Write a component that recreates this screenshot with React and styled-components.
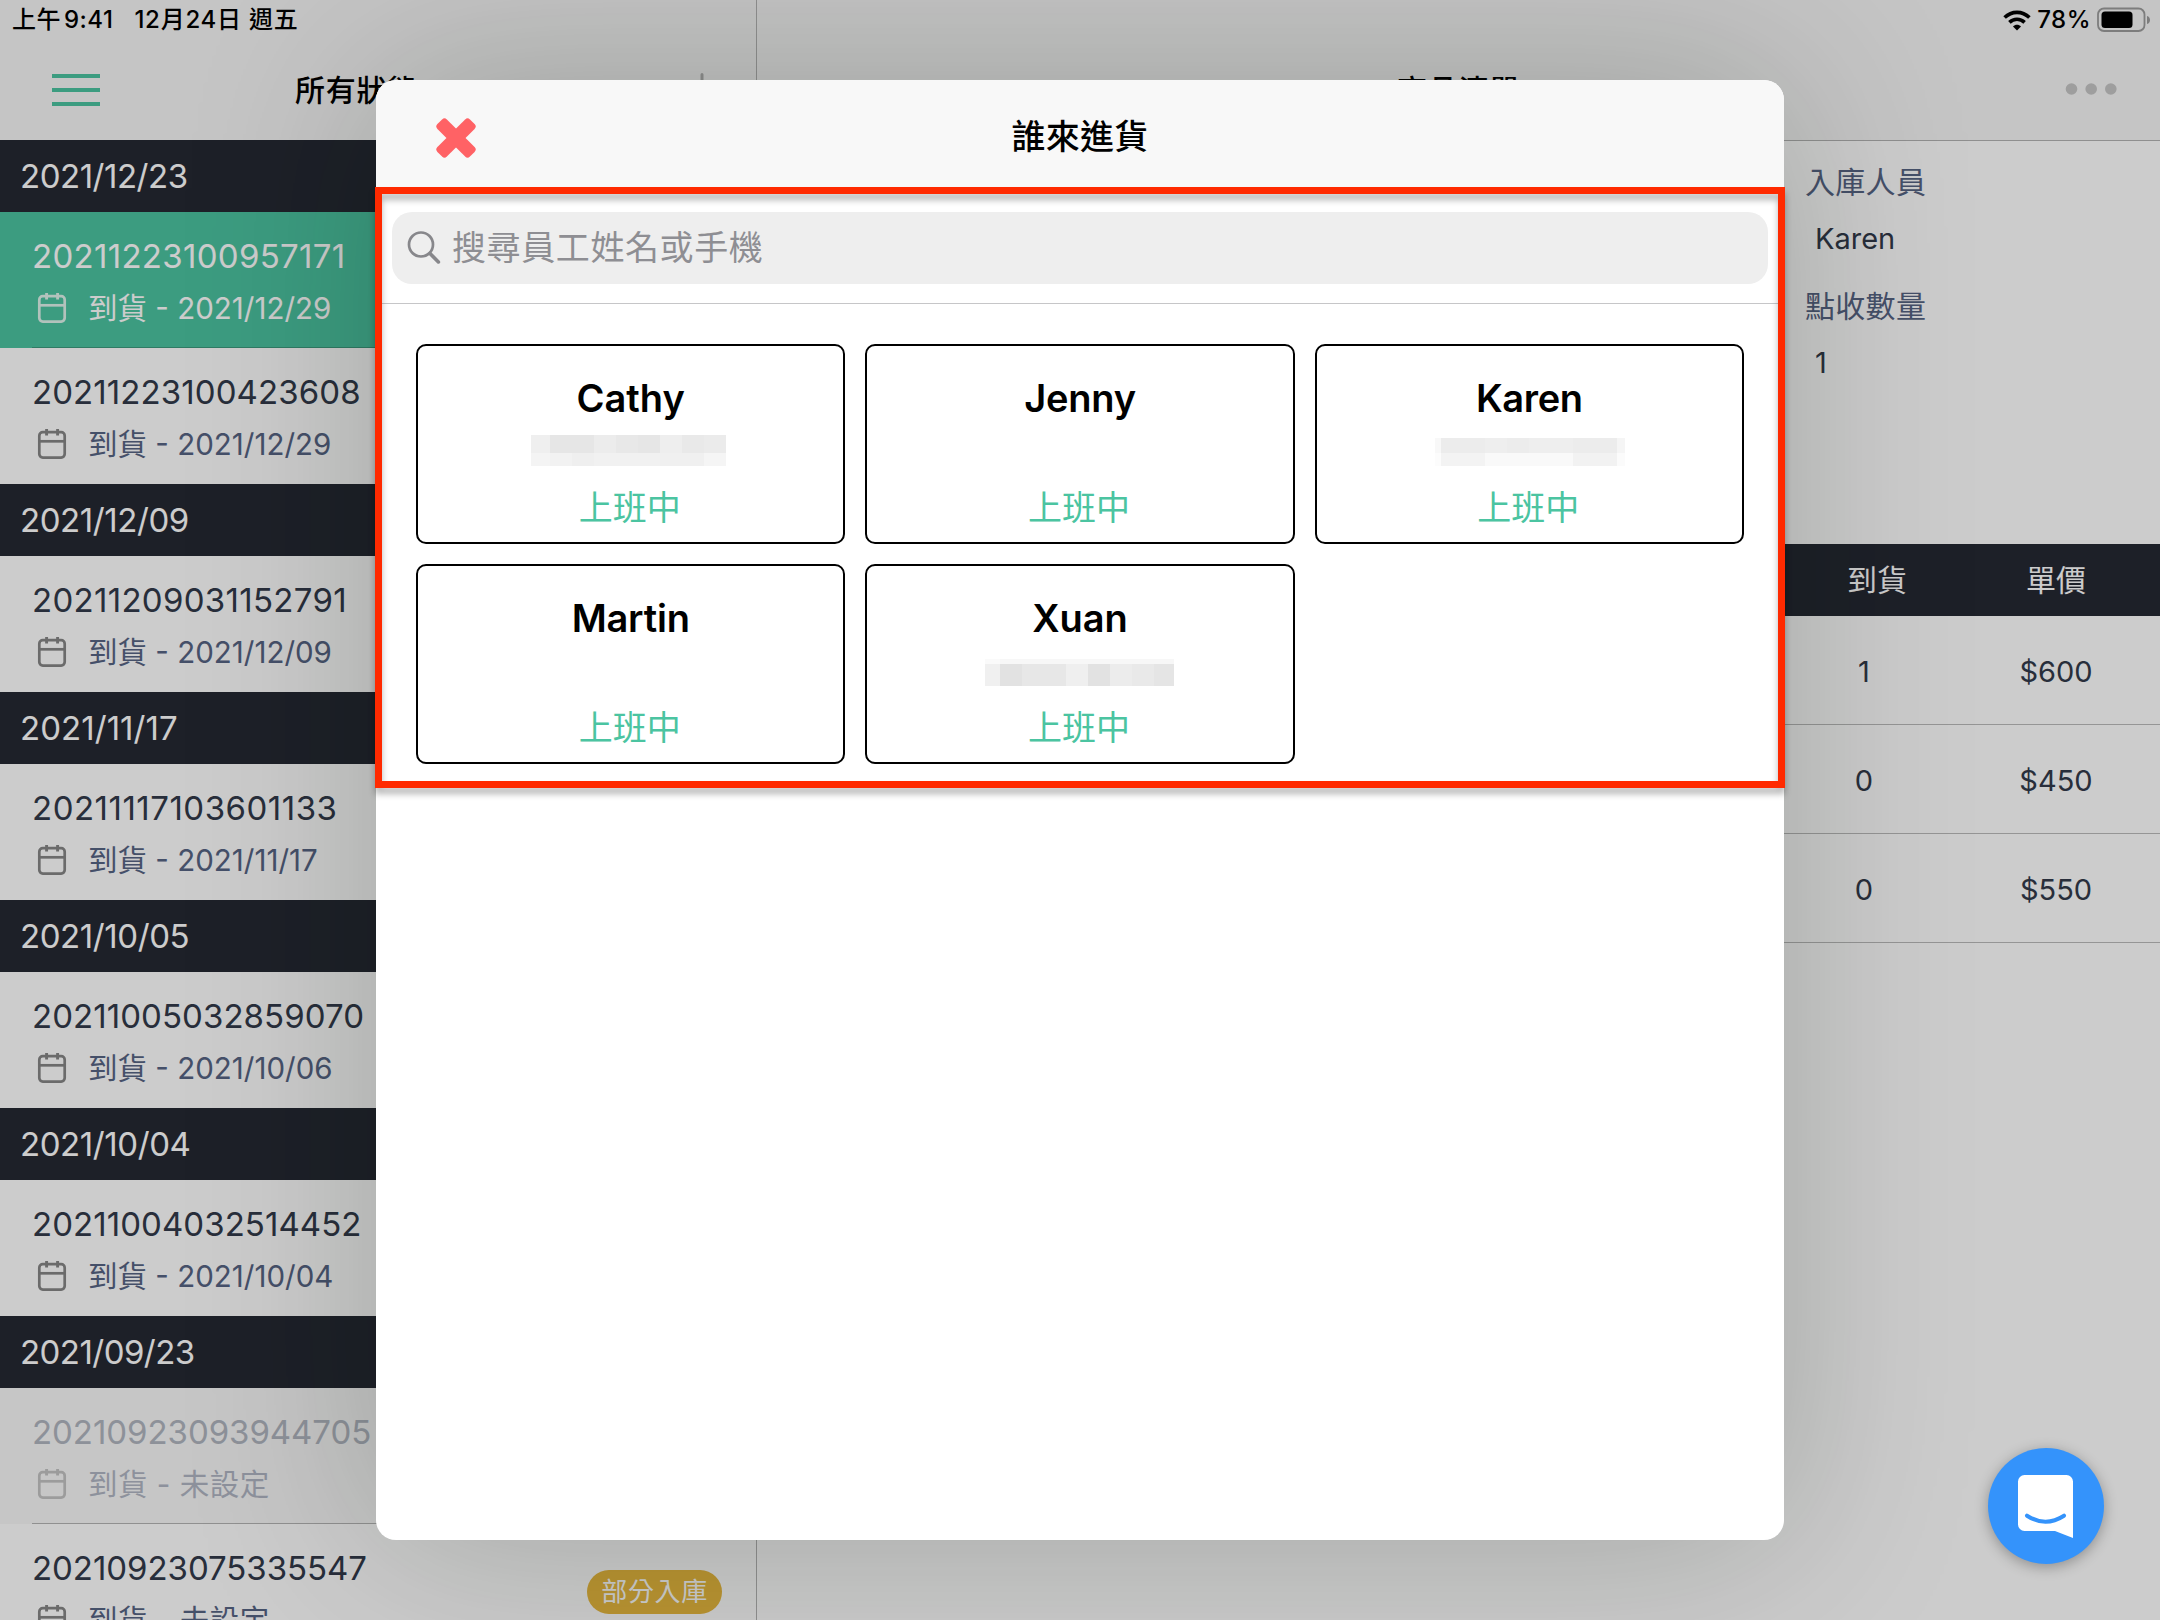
import React from "react";
import styled, { createGlobalStyle } from "styled-components";

const GlobalStyle = createGlobalStyle`
  * { box-sizing: border-box; }
  body {
    margin: 0;
    background: #fff;
    font-family: Inter, "Noto Sans CJK TC", sans-serif;
    font-size: 29px;
    color: #323a4a;
  }
`;

const Screen = styled.div`
  position: relative;
  display: flex;
  width: 2160px;
  height: 1620px;
  overflow: hidden;
  background: #fff;
`;

/* ---------- status bar ---------- */

const StatusBar = styled.div`
  position: absolute;
  top: 0;
  left: 0;
  right: 0;
  z-index: 3;
  display: flex;
  align-items: center;
  justify-content: space-between;
  height: 40px;
  padding: 0 9px 0 12px;
  font-size: 24px;
  font-weight: 500;
  line-height: 40px;
  color: #000;
`;

const StatusGroup = styled.div`
  display: flex;
  align-items: center;
  gap: ${(p) => p.$gap}px;
`;

const StatusText = styled.span`
  letter-spacing: ${(p) => p.$track || 0}px;
  word-spacing: ${(p) => p.$word || 0}px;
  white-space: pre;
`;

/* ---------- sidebar ---------- */

const Sidebar = styled.aside`
  display: flex;
  flex-direction: column;
  flex: none;
  width: 757px;
  border-right: 1px solid #b5b5b5;
`;

const NavBar = styled.header`
  display: flex;
  align-items: center;
  flex: none;
  height: ${(p) => p.$height}px;
  padding: 40px ${(p) => p.$right}px 0 52px;
  background: #f7f7f7;
  border-bottom: ${(p) => (p.$line ? "1px solid #b3b3b3" : "none")};
`;

const NavTitle = styled.h1`
  margin: 0 0 0 ${(p) => p.$left || 0}px;
  flex: ${(p) => (p.$center ? 1 : "none")};
  text-align: ${(p) => (p.$center ? "center" : "left")};
  font-size: 30px;
  font-weight: 500;
  line-height: 44px;
  letter-spacing: 0.7px;
  color: #000;
`;

const Burger = styled.div`
  display: flex;
  flex-direction: column;
  gap: 10px;
  width: 48px;
`;

const BurgerLine = styled.i`
  height: 4px;
  background: #4bc4a1;
`;

const Spacer = styled.div`
  flex: 1;
`;

const DateHeader = styled.h2`
  flex: none;
  height: 72px;
  margin: 0;
  padding: 1px 0 0 20px;
  background: #252833;
  color: #fff;
  font-size: 33px;
  font-weight: 400;
  line-height: 71px;
  letter-spacing: ${(p) => p.$track || 0}px;
`;

const OrderRow = styled.div`
  flex: none;
  display: flex;
  justify-content: space-between;
  height: 136px;
  padding-left: 32px;
  background: ${(p) => (p.$selected ? "#4bc4a1" : p.$faded ? "#f8f8f8" : "#fff")};
  color: ${(p) => (p.$selected ? "#fff" : p.$faded ? "#b1b6c0" : "#323a4a")};
`;

const OrderBody = styled.div`
  flex: 1;
  display: flex;
  justify-content: space-between;
  border-bottom: ${(p) =>
    p.$divider ? `1px solid ${p.$selected ? "#3b9a7e" : "#b5b5b5"}` : "none"};
`;

const OrderId = styled.div`
  margin-top: 20px;
  height: 48px;
  font-size: 33px;
  line-height: 48px;
  letter-spacing: ${(p) => p.$track || 0}px;
`;

const OrderMeta = styled.div`
  display: flex;
  align-items: center;
  gap: 21px;
  height: 48px;
  margin-top: 4px;
  padding-left: 5px;
  font-size: 29.5px;
  line-height: 48px;
  white-space: pre;
  color: ${(p) => (p.$selected ? "#fff" : p.$faded ? "#b1b6c4" : "#576484")};
`;

const MetaText = styled.span`
  letter-spacing: ${(p) => (p.$wide ? 0.5 : 0)}px;
`;

const Badge = styled.span`
  flex: none;
  align-self: flex-start;
  height: 44px;
  margin: 46px 34px 0 0;
  padding: 0 14px;
  border-radius: 22px;
  background: #e9b93f;
  color: #fff;
  font-size: 26px;
  line-height: 43px;
  letter-spacing: 0.7px;
`;

/* ---------- detail pane ---------- */

const Detail = styled.main`
  flex: 1;
  display: flex;
  flex-direction: column;
`;

const Summary = styled.dl`
  flex: none;
  display: flex;
  flex-direction: column;
  align-items: flex-start;
  width: 360px;
  height: 403px;
  margin: 0 0 0 auto;
  padding: 16px 0 0 5px;
`;

const Term = styled.dt`
  height: 50px;
  margin-top: ${(p) => p.$top || 0}px;
  color: #576484;
  font-size: 30px;
  line-height: 50px;
  letter-spacing: 0.3px;
`;

const Value = styled.dd`
  height: 50px;
  margin: 7px 0 0 10px;
  font-size: 29px;
  line-height: 50px;
`;

const TableRow = styled.div`
  flex: none;
  display: flex;
  justify-content: flex-end;
  height: ${(p) => (p.$head ? 72 : 109)}px;
  line-height: ${(p) => (p.$head ? 73 : 111)}px;
  padding-right: 8px;
  background: ${(p) => (p.$head ? "#252833" : "#fff")};
  color: ${(p) => (p.$head ? "#fff" : "#323a4a")};
  font-size: ${(p) => (p.$head ? 30 : 29)}px;
  border-bottom: ${(p) => (p.$head ? "none" : "1px solid #bbb")};
`;

const Cell = styled.span`
  width: 192px;
  text-align: center;
  padding-left: ${(p) => p.$shift || 0}px;
`;

/* ---------- modal ---------- */

const Backdrop = styled.div`
  position: absolute;
  inset: 0;
  z-index: 2;
  display: grid;
  place-items: center;
  background: rgba(0, 0, 0, 0.2);
`;

const Modal = styled.section`
  position: relative;
  display: flex;
  flex-direction: column;
  width: 1408px;
  height: 1460px;
  border-radius: 20px;
  background: #fff;
  box-shadow: 0 0 190px rgba(0, 20, 0, 0.21);
`;

const ModalHeader = styled.header`
  display: grid;
  grid-template-columns: 160px 1fr 160px;
  align-items: center;
  height: 108px;
  padding-top: 7px;
  border-radius: 20px 20px 0 0;
  background: #f8f8f8;
`;

const ModalTitle = styled.h2`
  margin: 0 0 2px;
  text-align: center;
  font-size: 34px;
  font-weight: 500;
  line-height: 50px;
  letter-spacing: 0.3px;
  color: #000;
`;

const CloseButton = styled.div`
  display: flex;
  padding-left: 58px;
`;

const SearchArea = styled.div`
  height: 116px;
  padding: 24px 16px 0;
  border-bottom: 1px solid #c6c6c8;
`;

const SearchField = styled.div`
  display: flex;
  align-items: center;
  gap: 11px;
  height: 72px;
  padding-left: 15px;
  border-radius: 20px;
  background: #eee;
  color: #8e8e93;
  font-size: 34px;
  line-height: 72px;
  letter-spacing: 0.6px;
`;

const StaffGrid = styled.div`
  display: grid;
  grid-template-columns: repeat(3, 1fr);
  grid-auto-rows: 200px;
  gap: 20px;
  padding: 40px;
`;

const StaffCard = styled.div`
  display: flex;
  flex-direction: column;
  align-items: center;
  padding: 27px 2px 0 0;
  border: 2px solid #000;
  border-radius: 10px;
  background: #fff;
`;

const StaffName = styled.div`
  height: 50px;
  padding-left: 2px;
  font-size: 38px;
  font-weight: 600;
  line-height: 50px;
  letter-spacing: ${(p) => p.$track || 0}px;
  color: #000;
`;

const PhoneSlot = styled.div`
  display: flex;
  flex-direction: column;
  height: 60px;
  padding: ${(p) => p.$top}px ${(p) => p.$right}px 0 ${(p) => p.$left}px;
`;

const MaskLine = styled.div`
  display: flex;
  height: ${(p) => p.$height}px;
`;

const MaskBlock = styled.i`
  width: ${(p) => p.$width}px;
  background: ${(p) => p.$tone};
`;

const StaffState = styled.div`
  height: 50px;
  color: #4bc4a1;
  font-size: 34px;
  line-height: 49px;
`;

const Highlight = styled.div`
  position: absolute;
  left: -1px;
  top: 107px;
  width: 1410px;
  height: 601px;
  border: 7px solid #ff2a00;
  filter: drop-shadow(0 6px 3px rgba(0, 0, 0, 0.28));
`;

const ChatButton = styled.div`
  position: absolute;
  z-index: 4;
  left: 1988px;
  top: 1448px;
  width: 116px;
  height: 116px;
  border-radius: 50%;
  background: #3493fb;
  box-shadow: 0 3px 14px rgba(0, 0, 0, 0.3);
`;

/* ---------- icons ---------- */

const WifiIcon = () => (
  <svg width="28" height="21" viewBox="0 0 28 21" fill="none" stroke="#000" strokeWidth="3.6">
    <path d="M1.6 7.6C8.6 .6 19.4 .6 26.4 7.6" />
    <path d="M6.4 12.4c4.3-4.2 10.9-4.2 15.2 0" />
    <path d="M14 20.5l-4-4.1c2.2-2.2 5.8-2.2 8 0z" fill="#000" stroke="none" />
  </svg>
);

const BatteryIcon = () => (
  <svg width="54" height="26" viewBox="0 0 54 26">
    <rect x="1" y="1.5" width="46.5" height="22.5" rx="6" fill="none" stroke="#7d7d7d" strokeWidth="1.8" />
    <rect x="4.5" y="4.5" width="31" height="16.5" rx="3.5" fill="#000" />
    <path d="M50 9c4 1 4 7 0 8z" fill="#7d7d7d" />
  </svg>
);

const CalendarIcon = ({ color }) => (
  <svg width="30" height="32" viewBox="0 0 30 32" fill="none" stroke={color} strokeWidth="2.7">
    <rect x="2.3" y="4.2" width="25.4" height="25.4" rx="3.5" />
    <path d="M2.3 13.3h25.4" />
    <path d="M9.6 1v6.6M20.6 1v6.6" strokeWidth="2.9" />
  </svg>
);

const AddIcon = () => (
  <svg width="36" height="36" viewBox="0 0 36 36" stroke="#b3b3b3" strokeWidth="3" strokeLinecap="round">
    <path d="M18 2.5v31M2.5 18h31" />
  </svg>
);

const MoreIcon = () => (
  <svg width="52" height="14" viewBox="0 0 52 14" fill="#c6c6c6">
    <circle cx="6.5" cy="6" r="5.8" />
    <circle cx="26.2" cy="6" r="5.8" />
    <circle cx="45.8" cy="6" r="5.8" />
  </svg>
);

const CrossIcon = () => (
  <svg width="44" height="44" viewBox="-22 -22 44 44" fill="#ff6265">
    <rect x="-23" y="-6.7" width="46" height="13.4" rx="3.4" transform="rotate(45)" />
    <rect x="-23" y="-6.7" width="46" height="13.4" rx="3.4" transform="rotate(-45)" />
  </svg>
);

const SearchIcon = () => (
  <svg width="34" height="34" viewBox="0 0 34 34" fill="none" stroke="#87878b" strokeLinecap="round">
    <circle cx="14" cy="13.5" r="12" strokeWidth="2.7" />
    <path d="M23 22.5l8.400 8.400" strokeWidth="3.6" />
  </svg>
);

const ChatIcon = () => (
  <svg width="116" height="116" viewBox="0 0 116 116">
    <path
      d="M36.500 27H78.500a6.500 6.500 0 0 1 6.500 6.500V90L67 83H36.500a6.500 6.500 0 0 1-6.500-6.500V33.500a6.500 6.500 0 0 1 6.500-6.500z"
      fill="#fff"
    />
    <path d="M39 67.700q18.500 12 37 0" fill="none" stroke="#3493fb" strokeWidth="4" strokeLinecap="round" />
  </svg>
);

/* ---------- data ---------- */

const groups = [
  {
    date: "2021/12/23",
    track: -0.48,
    orders: [
      { id: "20211223100957171", track: 0.3, due: "2021/12/29", selected: true },
      { id: "20211223100423608", track: 0.09, due: "2021/12/29" },
    ],
  },
  {
    date: "2021/12/09",
    track: -0.42,
    orders: [{ id: "20211209031152791", track: 0.3, due: "2021/12/09" }],
  },
  {
    date: "2021/11/17",
    track: 0.05,
    orders: [{ id: "20211117103601133", track: 0.5, due: "2021/11/17" }],
  },
  {
    date: "2021/10/05",
    track: -0.42,
    orders: [{ id: "20211005032859070", track: 0.06, due: "2021/10/06" }],
  },
  {
    date: "2021/10/04",
    track: -0.42,
    orders: [{ id: "20211004032514452", track: 0.06, due: "2021/10/04" }],
  },
  {
    date: "2021/09/23",
    track: -0.55,
    orders: [
      { id: "20210923093944705", track: -0.05, due: "未設定", faded: true },
      { id: "20210923075335547", track: -0.05, due: "未設定", badge: "部分入庫" },
    ],
  },
];

const items = [
  { arrived: "1", price: "$600" },
  { arrived: "0", price: "$450" },
  { arrived: "0", price: "$550" },
];

const staff = [
  {
    name: "Cathy",
    mask: {
      top: 12,
      left: 0,
      right: 2,
      lines: [
        { height: 18, blocks: [[19, "#efefef"], [44, "#e6e6e6"], [22, "#ececec"], [22, "#e8e8e8"], [22, "#e6e6e6"], [22, "#eeeeee"], [22, "#e9e9e9"], [22, "#ebebeb"]] },
        { height: 13, blocks: [[19, "#f4f4f4"], [22, "#f2f2f2"], [22, "#efefef"], [66, "#f1f1f1"], [44, "#f0f0f0"], [22, "#f5f5f5"]] },
      ],
    },
  },
  { name: "Jenny", track: -0.2 },
  {
    name: "Karen",
    track: -0.35,
    mask: {
      top: 15,
      left: 4,
      right: 0,
      lines: [
        { height: 15, blocks: [[6, "#f8f8f8"], [44, "#ececec"], [22, "#eeeeee"], [22, "#ececec"], [44, "#eeeeee"], [44, "#ececec"], [8, "#f5f5f5"]] },
        { height: 13, blocks: [[6, "#fcfcfc"], [44, "#f3f3f3"], [88, "#f9f9f9"], [44, "#f2f2f2"], [8, "#fbfbfb"]] },
      ],
    },
  },
  { name: "Martin", track: -0.2 },
  {
    name: "Xuan",
    mask: {
      top: 16,
      left: 2,
      right: 0,
      lines: [
        { height: 5, blocks: [[15, "#fafafa"], [174, "#f7f7f7"]] },
        { height: 22, blocks: [[15, "#f0f0f0"], [22, "#e2e2e2"], [44, "#e7e7e7"], [22, "#efefef"], [22, "#e2e2e2"], [22, "#ececec"], [22, "#e9e9e9"], [20, "#e5e5e5"]] },
      ],
    },
  },
];

/* ---------- parts ---------- */

function Order({ id, track, due, selected, faded, badge, divider }) {
  const iconColor = selected ? "#dff3ec" : faded ? "#c3c3c3" : "#868686";
  return (
    <OrderRow $selected={selected} $faded={faded}>
      <OrderBody $divider={divider} $selected={selected}>
        <div>
          <OrderId $track={track}>{id}</OrderId>
          <OrderMeta $selected={selected} $faded={faded}>
            <CalendarIcon color={iconColor} />
            <MetaText $wide={due === "未設定"}>到貨 - {due}</MetaText>
          </OrderMeta>
        </div>
        {badge && <Badge>{badge}</Badge>}
      </OrderBody>
    </OrderRow>
  );
}

function Staff({ name, track, mask }) {
  return (
    <StaffCard>
      <StaffName $track={track}>{name}</StaffName>
      <PhoneSlot
        $top={mask ? mask.top : 0}
        $left={mask ? mask.left : 0}
        $right={mask ? mask.right : 0}
      >
        {mask &&
          mask.lines.map((line, i) => (
            <MaskLine key={i} $height={line.height}>
              {line.blocks.map(([width, tone], j) => (
                <MaskBlock key={j} $width={width} $tone={tone} />
              ))}
            </MaskLine>
          ))}
      </PhoneSlot>
      <StaffState>上班中</StaffState>
    </StaffCard>
  );
}

export default function App() {
  return (
    <>
      <GlobalStyle />
      <Screen>
        <StatusBar>
          <StatusGroup $gap={21}>
            <StatusText $track={0.5} $word={-4}>上午 9:41</StatusText>
            <StatusText $track={0.75}>12月24日 週五</StatusText>
          </StatusGroup>
          <StatusGroup $gap={6}>
            <WifiIcon />
            <StatusText $track={0.5}>78%</StatusText>
            <BatteryIcon />
          </StatusGroup>
        </StatusBar>

        <Sidebar>
          <NavBar $height={140} $right={36}>
            <Burger>
              <BurgerLine />
              <BurgerLine />
              <BurgerLine />
            </Burger>
            <NavTitle $left={195}>所有狀態</NavTitle>
            <Spacer />
            <AddIcon />
          </NavBar>
          {groups.map((group) => (
            <React.Fragment key={group.date}>
              <DateHeader $track={group.track}>{group.date}</DateHeader>
              {group.orders.map((order, i) => (
                <Order key={order.id} {...order} divider={i < group.orders.length - 1} />
              ))}
            </React.Fragment>
          ))}
        </Sidebar>

        <Detail>
          <NavBar $height={141} $right={43} $line>
            <NavTitle $center $left={43}>商品清單</NavTitle>
            <MoreIcon />
          </NavBar>
          <Summary>
            <Term>入庫人員</Term>
            <Value>Karen</Value>
            <Term $top={17}>點收數量</Term>
            <Value>1</Value>
          </Summary>
          <TableRow $head>
            <Cell $shift={26}>到貨</Cell>
            <Cell>單價</Cell>
          </TableRow>
          {items.map((item) => (
            <TableRow key={item.price}>
              <Cell>{item.arrived}</Cell>
              <Cell>{item.price}</Cell>
            </TableRow>
          ))}
        </Detail>

        <Backdrop>
          <Modal>
            <ModalHeader>
              <CloseButton>
                <CrossIcon />
              </CloseButton>
              <ModalTitle>誰來進貨</ModalTitle>
            </ModalHeader>
            <SearchArea>
              <SearchField>
                <SearchIcon />
                搜尋員工姓名或手機
              </SearchField>
            </SearchArea>
            <StaffGrid>
              {staff.map((person) => (
                <Staff key={person.name} {...person} />
              ))}
            </StaffGrid>
            <Highlight />
          </Modal>
        </Backdrop>

        <ChatButton>
          <ChatIcon />
        </ChatButton>
      </Screen>
    </>
  );
}
